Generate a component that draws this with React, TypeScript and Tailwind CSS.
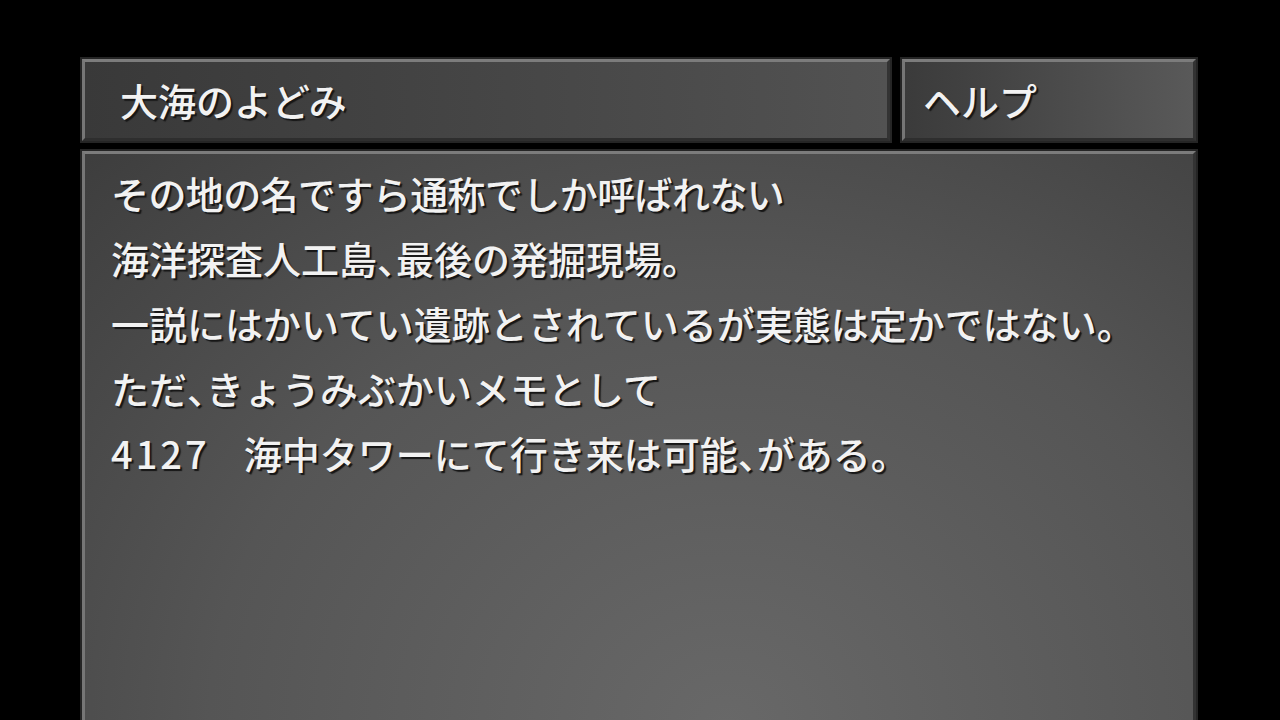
// 、 is set half width, as in the reference
const Comma = () => <span className="[font-feature-settings:'halt']">、</span>

const frame =
  'border-[3px] border-t-[#7c7c7c] border-l-[#767676] border-b-[#2e2e2e] border-r-[#333333] shadow-[0_0_0_2px_#252525]'

const glyph =
  "text-[#f2f2f2] font-medium [font-family:'Noto_Sans_CJK_JP','Noto_Sans',sans-serif] [text-shadow:2px_2px_1px_#161616]"

export default function App() {
  return (
    <div className="h-[720px] w-[1280px] overflow-hidden bg-black pt-[59px] pl-[82px] pr-[84px]">
      <div className="flex gap-[12px] h-[82px]">
        <div
          className={`${frame} w-[808px] flex items-center pl-[35px] bg-gradient-to-r from-[#393939] to-[#525252]`}
        >
          <span className={`${glyph} text-[38px] leading-none`}>大海のよどみ</span>
        </div>
        <div
          className={`${frame} flex-1 flex items-center pl-[18px] bg-gradient-to-r from-[#3b3b3b] to-[#595959]`}
        >
          <span className={`${glyph} text-[38px] leading-none`}>ヘルプ</span>
        </div>
      </div>

      <div
        className={`${frame} mt-[10px] h-[640px] pl-[26px] pt-[6px] bg-[radial-gradient(ellipse_85%_130%_at_58%_90%,#686868_0%,#555555_55%,#3c3c3c_100%)]`}
      >
        <div className={`${glyph} text-[38px] leading-[65px] whitespace-nowrap`}>
          <p className="tracking-[-0.6px]">その地の名ですら通称でしか呼ばれない</p>
          <p>
            海洋探査人工島<Comma />最後の発掘現場。
          </p>
          <p>一説にはかいてい遺跡とされているが実態は定かではない。</p>
          <p>
            ただ<Comma />きょうみぶかいメモとして
          </p>
          <p>
            <span className="tracking-[3px] mr-[34px]">4127</span>海中タワーにて行き来は可能<Comma />がある。
          </p>
        </div>
      </div>
    </div>
  )
}
